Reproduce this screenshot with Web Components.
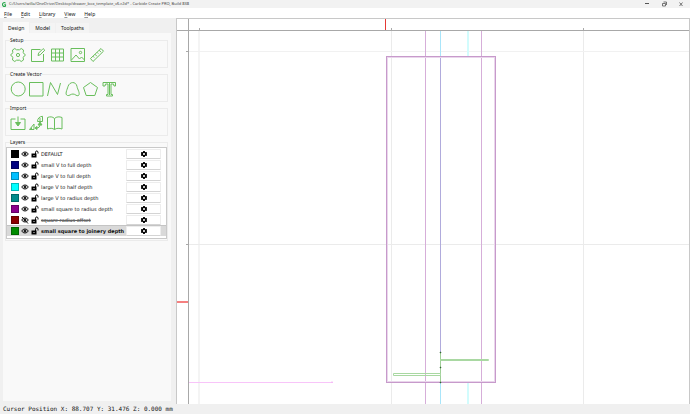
<!DOCTYPE html>
<html lang="en">
<head>
<meta charset="utf-8">
<title>Carbide Create</title>
<style>
html, body { margin: 0; height: 100%; }
body { font-family: "Noto Sans", "Open Sans", sans-serif; font-size: 5px; line-height: 8px; color: #111; }
</style>
</head>
<body>
<cc-app></cc-app>
<script>
const RESET = `*{box-sizing:border-box} button{font:inherit;color:inherit;background:none;border:0;margin:0;padding:0;display:block} svg{display:block}`;
function define(name, html) {
  const tpl = document.createElement('template');
  customElements.define(name, class extends HTMLElement {
    constructor() { super(); this.attachShadow({ mode: 'open' }); }
    connectedCallback() {
      if (this.shadowRoot.firstChild) return;
      tpl.innerHTML = `<style>${RESET}</style>` + (typeof html === 'function' ? html(this) : html);
      this.shadowRoot.append(tpl.content.cloneNode(true));
    }
  });
}

const ICONS = {
  gear: '<path d="M4.800 1.500L6.500 2.800h3l1.700-1.300 2.300 1.500-.3 2.500 1 1.500 1.300 1-1.300 1-1 1.500.3 2.500-2.300 1.500-1.700-1.300h-3l-1.700 1.300-2.300-1.500.3-2.500-1-1.500L.500 8l1.300-1 1-1.500L2.500 3z"/><circle cx="8" cy="8" r="1.600"/>',
  edit: '<path d="M10.500 2.500h-9v12h12V7"/><path d="M8 8.500l.6-2.400 4.500-4.500 1.700 1.600L10.200 7.800z"/>',
  grid: '<path d="M1.500 2h12v12h-12zM5.500 2v12M9.500 2v12M1.500 6h12M1.500 10h12"/>',
  image: '<path d="M1 1.500h13.500v13H1zM1.500 13l4.500-5 3.500 4 2-2 3 3"/><circle cx="10.500" cy="5.500" r="1.200"/>',
  ruler: '<path d="M.5 11.500L11 1.500l2.500 2.700L3 14.500zM3 9.200l1.200 1.300M5 7.200l1.800 2M7 5.300l1.300 1.300M9.200 3.200l1.800 2"/>',
  circle: '<circle cx="8.200" cy="8" r="7"/>',
  square: '<path d="M1.500 1.500h13.500v13.500H1.500z"/>',
  polyline: '<path d="M1.500 15L4.500 1.500l7 12 3-11.500"/>',
  curve: '<path d="M3.500 14.500C.5 13.500 3 9 4 5.500 5.500 .5 12 0 13 5.500c.5 3 3.500 7 1.500 9-2 1-3-1.500-5.500-1.500S5.500 15 3.500 14.500z"/>',
  pentagon: '<path d="M8.500 1.500l7 5-2.700 8H4.200L1.500 6.500z"/>',
  text: '<path d="M3 1.500h12.500V5H14l-.5-2h-2.500v10.500h1.500v1.500H6.500v-1.500H8V3H5.500L5 5H3zM9.500 2v12"/>',
  download: '<path d="M5.500 4H1v10.500h14V4h-4.500M8 1.500V9"/><path class="fill" d="M5.500 7.500h5L8 11z"/>',
  trace: '<path d="M9.500 6.500c0-3 2-5 5-5.200v5.200zM1.500 14.500L6 9v5.500zM3.500 14.500v-2M12 3v3.500"/><path d="M8 13c3 0 4-1 4-4"/><path class="fill" d="M10 10l2-3 2 3zM9 11.500L7 13l2 1.500z"/>',
  book: '<path d="M8.500 3.500C6.500 1.500 4 1.500 1.500 2.500v11.500c2.500-1 5-1 7 .5 2-1.500 5-1.500 7.500-.5V2.500c-2.500-1-5.500-1-7.500 1zM8.500 3.500v11"/>'
};
define('cc-tool', el => `<style>
:host{display:block;width:16px;height:16px}
button{width:100%}
svg{width:100%;height:auto;overflow:visible;fill:none;stroke:#69be5c;stroke-width:1;stroke-linejoin:round}
.fill{fill:#69be5c}
</style><button aria-label="${el.getAttribute('name')}"><svg viewBox="0 0 16 16">${ICONS[el.getAttribute('name')]}</svg></button>`);

define('cc-group', el => `<style>
:host{display:block}
fieldset{margin:0;padding:0 4px 4px;border:1px solid #ebebeb;min-width:0}
:host([flush]) fieldset{padding:0 0 1px}
legend{padding:0;height:8px}
:host([flush]) legend{margin-left:4px}
.row{display:flex;gap:var(--gap,2px);padding-top:3px}
:host([flush]) .row{display:block;padding-top:1px}
</style><fieldset><legend>${el.getAttribute('label')}</legend><div class="row"><slot></slot></div></fieldset>`);

define('cc-layer', el => {
  const off = el.hasAttribute('off');
  return `<style>
:host{display:grid;grid-template-columns:8px 8px 8px minmax(0,1fr) 35px;column-gap:2px;align-items:center;height:11px;padding:0 5px 0 4px;white-space:nowrap;font-family:"DejaVu Sans",sans-serif}
:host([selected]){background:#d9d9d9;font-weight:bold;box-shadow:inset 0 1px #c4c4c4}
:host([off]) .name{text-decoration:line-through;text-decoration-color:#666}
.swatch{width:8px;height:8px;background:${el.getAttribute('color')};border:1px solid #0004}
svg{width:8px;height:8px}
.more{height:10px;background:#fff;border:1px solid #ededed;border-bottom-color:#d4d4d4;border-radius:1px;display:grid;place-items:center}
.more svg{width:6px;height:6px}
</style>
<span class="swatch"></span>
<button aria-label="Visibility"><svg viewBox="0 0 16 16" fill="none" stroke="#111" stroke-width="2"><path d="M1.500 8C4 2.800 12 2.800 14.500 8 12 13.200 4 13.200 1.500 8z"/><circle cx="8" cy="8" r="2" fill="#111"/>${off ? '<path d="M2 2l12 13"/>' : ''}</svg></button>
<button aria-label="Lock"><svg viewBox="0 0 16 16"><path d="M1 7h10v8H1z"/><path d="M9 8V4.500c0-3.500 5-3.500 5 0V7" fill="none" stroke="#000" stroke-width="2"/><circle cx="6" cy="11" r="1.200" fill="#fff"/></svg></button>
<span class="name"><slot></slot></span>
<button class="more" aria-label="Layer settings"><svg viewBox="0 0 16 16"><path fill-rule="evenodd" d="M6 0h4l.8 2.600 1.400.8 2.600-.7 2 3.500L14.800 8l2 1.800-2 3.500-2.600-.7-1.400.8L10 16H6l-.8-2.600-1.400-.8-2.600.7-2-3.500L1.200 8l-2-1.800 2-3.500 2.600.7 1.400-.8zM8 5.200a2.800 2.800 0 1 0 0 5.600 2.800 2.800 0 1 0 0-5.600z"/></svg></button>`;
});

define('cc-titlebar', `<style>
:host{display:flex;align-items:center;height:8px;background:#f2f2f2;color:#444;padding:0 5px 0 2px;gap:3px;white-space:nowrap;font-size:4px}
.logo{width:4px;height:5px;overflow:visible}
.title{flex:1}
.controls{display:flex;gap:9px}
.controls svg{width:8px;height:8px;fill:none;stroke:#555}
</style>
<svg class="logo" viewBox="0 0 8 10" fill="none" stroke="#27a74a" stroke-width="2.200"><path d="M7 2.500C5 0 1 1 1 5s4 5 6 3V5.500H4.500"/></svg>
<span class="title"><slot></slot></span>
<div class="controls">
<button aria-label="Minimize"><svg viewBox="0 0 8 8"><path d="M2 3.500h4"/></svg></button>
<button aria-label="Restore"><svg viewBox="0 0 8 8"><path d="M2.500 3.500h3v2.500h-3zM3.500 2h3v3" stroke-width=".8"/></svg></button>
<button aria-label="Close"><svg viewBox="0 0 8 8"><path d="M2.500 2.500l3 3.500M5.500 2.500l-3 3.500" stroke-width=".8"/></svg></button>
</div>`);

define('cc-menubar', `<style>
:host{display:flex;gap:9px;height:10px;padding:2px 4px 0;background:#fff}
u{text-underline-offset:1px;text-decoration-thickness:1px;text-decoration-color:#999}
</style>
<button><u>F</u>ile</button><button><u>E</u>dit</button><button><u>L</u>ibrary</button><button><u>V</u>iew</button><button><u>H</u>elp</button>`);

define('cc-sidebar', `<style>
:host{display:flex;flex-direction:column;background:#f0f0f0;padding:4px 5px 3px 3px;min-width:0}
.tabs{display:flex;gap:1px;height:11px;align-items:flex-end}
.tabs button{padding:0 5px;height:10px;background:#f4f4f4}
.tabs button[aria-selected=true]{background:#f9f9f9;height:11px}
.panel{flex:1;background:#f9f9f9;padding:3px 3px 0 2px;display:flex;flex-direction:column;gap:2px}
.list{background:#fff;border:1px solid #c9c9c9;padding:0 0 2px}
</style>
<div class="tabs" role="tablist"><button role="tab" aria-selected="true">Design</button><button role="tab">Model</button><button role="tab">Toolpaths</button></div>
<div class="panel">
<cc-group label="Setup" style="--gap:4px"><cc-tool name="gear"></cc-tool><cc-tool name="edit"></cc-tool><cc-tool name="grid"></cc-tool><cc-tool name="image"></cc-tool><cc-tool name="ruler"></cc-tool></cc-group>
<cc-group label="Create Vector"><cc-tool name="circle"></cc-tool><cc-tool name="square"></cc-tool><cc-tool name="polyline"></cc-tool><cc-tool name="curve"></cc-tool><cc-tool name="pentagon"></cc-tool><cc-tool name="text"></cc-tool></cc-group>
<cc-group label="Import"><cc-tool name="download"></cc-tool><cc-tool name="trace"></cc-tool><cc-tool name="book"></cc-tool></cc-group>
<cc-group label="Layers" flush><div class="list">
<cc-layer color="#000">DEFAULT</cc-layer>
<cc-layer color="#000080">small V to full depth</cc-layer>
<cc-layer color="#00bfff">large V to full depth</cc-layer>
<cc-layer color="#00ffff">large V to half depth</cc-layer>
<cc-layer color="#008b8b">large V to radius depth</cc-layer>
<cc-layer color="#8b008b">small square to radius depth</cc-layer>
<cc-layer color="#8b0000" off>square radius offset</cc-layer>
<cc-layer color="#008b00" selected>small square to joinery depth</cc-layer>
</div></cc-group>
</div>`);

define('cc-canvas', `<style>
:host{display:grid;grid-template:12px minmax(0,1fr)/12px minmax(0,1fr);background:#fff;border:1px solid #c8c8c8;border-bottom:0;min-width:0;min-height:0}
svg{width:100%;height:100%;min-width:0;min-height:0;fill:none}
.corner,.top{border-bottom:1px solid #a8a8a8}
.corner,.left{border-right:1px solid #a8a8a8}
.drawing{grid-area:2/2}
</style>
<div class="corner"></div>
<svg class="top"><path d="M10.500 9v3M202.500 9v3M394.500 9v3" stroke="#aaa"/><path d="M196.500 0v11" stroke="#e53935"/></svg>
<svg class="left"><path d="M9 20.500h3M9 213.500h3" stroke="#aaa"/><path d="M0 271h12" stroke="#f58080" stroke-width="2"/></svg>
<svg class="drawing">
<g stroke="#ebebeb"><line x1="10" x2="10" y2="100%" stroke="#f4f4f4" stroke-width="2"/><line x1="202.500" x2="202.500" y2="100%"/><line x1="394.500" x2="394.500" y2="100%"/><line y1="20.500" y2="20.500" x2="100%" stroke="#f1f1f1"/><line y1="213.500" y2="213.500" x2="100%"/></g>
<g stroke="#d6aed9"><line x1="236.500" x2="236.500" y2="100%"/><line x1="292.500" x2="292.500" y2="100%"/></g>
<g stroke="#d2fcfd" stroke-width="2"><line x1="279" x2="279" y2="26"/><line x1="279" x2="279" y1="352" y2="100%"/></g>
<g stroke="#a9e5fa"><line x1="251.500" x2="251.500" y2="26"/><line x1="251.500" x2="251.500" y1="352" y2="100%"/></g>
<line x1="251.500" x2="251.500" y1="26" y2="321" stroke="#b0abdc"/>
<rect x="198" y="26" width="108" height="325" stroke="#ead6ec" stroke-width="2"/>
<rect x="197.500" y="25.500" width="109" height="326" stroke="#c79acb"/>
<path d="M251.500 321v31" stroke="#a0cf98"/>
<path d="M204.500 342.500h47v2h-47zM251.500 328.500h48v1h-48z" stroke="#a9d8a2"/>
<path d="M251 321h1v1h-1zM251 336h1v1h-1zM251 351h1v1h-1z" fill="#285c28" stroke="#396839" stroke-width=".5"/>
<path d="M0 351.500h144" stroke="#f8c4f9"/><path d="M142.500 350.500h1v1h-1z" fill="#eb9bed"/>
</svg>`);

define('cc-status', `<style>
:host{display:block;height:10px;padding:1px 3px;background:#f0f0f0;font-family:"DejaVu Sans Mono","Liberation Mono",monospace;font-size:6px;white-space:nowrap}
</style><slot></slot>`);

define('cc-app', `<style>
:host{display:grid;grid-template:auto auto minmax(0,1fr) auto/176px minmax(0,1fr);min-height:100vh}
cc-titlebar,cc-menubar,cc-status{grid-column:1/-1}
</style>
<cc-titlebar>C:/Users/willa/OneDrive/Desktop/drawer_box_template_v6.c2d* - Carbide Create PRO, Build 838</cc-titlebar>
<cc-menubar></cc-menubar><cc-sidebar></cc-sidebar><cc-canvas></cc-canvas>
<cc-status>Cursor Position X: 88.707 Y: 31.476 Z: 0.000 mm</cc-status>`);
</script>
</body>
</html>
